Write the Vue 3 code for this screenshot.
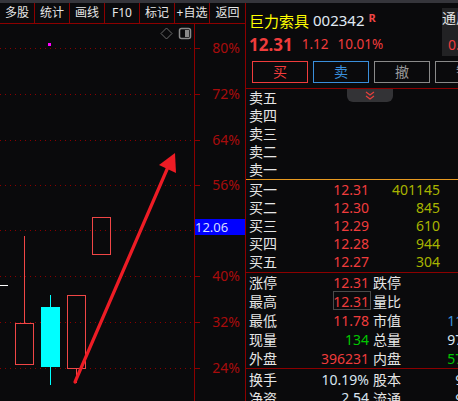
<template>
  <div class="page">
    <div class="top-strip"></div>
    <div class="main">
      <div class="left">
        <div class="toolbar">
          <div v-for="item in tools" :key="item" class="tool">{{ item }}</div>
        </div>
        <svg class="chart" viewBox="0 24 245 377" width="245" height="377">
          <g v-for="g in grid" :key="g.y">
            <line x1="0" :y1="g.y + 0.5" x2="194" :y2="g.y + 0.5" class="dots" />
            <line x1="194" :y1="g.y + 0.5" x2="200" :y2="g.y + 0.5" class="tick" />
            <text v-if="g.label" x="240" :y="g.y + 5" text-anchor="end" class="pct">{{ g.label }}</text>
          </g>
          <line x1="194.5" y1="24" x2="194.5" y2="401" class="tick" />

          <rect x="48" y="43" width="3" height="3" fill="#ff00ff" />
          <line x1="0" y1="285.5" x2="8" y2="285.5" stroke="#fff" />

          <line x1="24.5" y1="236" x2="24.5" y2="323" class="up" />
          <rect x="15.5" y="323.5" width="18" height="41" class="up" />
          <line x1="50.5" y1="295" x2="50.5" y2="385" stroke="#00ffff" />
          <rect x="41" y="307" width="19" height="60" fill="#00ffff" />
          <line x1="76.5" y1="368" x2="76.5" y2="383" class="up" />
          <rect x="67.5" y="295.5" width="18" height="73" class="up" />
          <rect x="92.5" y="217.5" width="18" height="37" class="up" />

          <line x1="75" y1="382" x2="168" y2="167" stroke="#ee1c25" stroke-width="3.2" stroke-linecap="round" />
          <polygon points="175,153 159,165 176,173" fill="#ee1c25" />

          <polygon points="166.5,28 172,33.5 166.5,39 161,33.5" fill="none" stroke="#6a6a6a" />
          <rect x="179.5" y="28.5" width="11" height="10" rx="2" fill="none" stroke="#8a8a8a" stroke-width="1.5" />
          <rect x="185" y="30" width="4" height="7" fill="#8a8a8a" />

          <rect x="195" y="219" width="50" height="16" fill="#0000ff" />
          <text x="195" y="232" class="cur">12.06</text>
        </svg>
      </div>

      <div class="panel">
        <div class="head">
          <div class="title">
            <span class="name">巨力索具</span>
            <span class="code">002342</span>
            <span class="rong">R</span>
          </div>
          <div class="quote">
            <span class="last">12.31</span>
            <span class="chg">1.12</span>
            <span class="chg">10.01%</span>
          </div>
          <div class="side-box">
            <span>通用</span>
            <span class="side-val">0.</span>
          </div>
        </div>

        <div class="actions">
          <div class="act buy">买</div>
          <div class="act sell">卖</div>
          <div class="act">撤</div>
          <div class="act">智</div>
        </div>

        <div class="book sells">
          <div class="collapse">
            <svg width="12" height="9" viewBox="0 0 12 9">
              <path d="M2 1l4 3 4-3M2 5l4 3 4-3" fill="none" stroke="#e8403c" stroke-width="1.2" />
            </svg>
          </div>
          <div v-for="s in sells" :key="s" class="row">{{ s }}</div>
        </div>

        <div class="book buys">
          <div v-for="b in buys" :key="b.label" class="row">
            <span>{{ b.label }}</span>
            <span class="price">{{ b.price }}</span>
            <span class="vol">{{ b.vol }}</span>
          </div>
        </div>

        <div class="stats">
          <div v-for="r in stats" :key="r.a" class="stat">
            <span class="lab">{{ r.a }}</span>
            <span class="val" :class="[r.cls, { boxed: r.boxed }]">{{ r.av }}</span>
            <span class="lab lab2">{{ r.b }}</span>
            <span class="val2" :class="r.cls2">{{ r.bv }}</span>
          </div>
        </div>

        <div class="stats lower">
          <div v-for="r in lower" :key="r.a" class="stat">
            <span class="lab">{{ r.a }}</span>
            <span class="val plain">{{ r.av }}</span>
            <span class="lab lab2">{{ r.b }}</span>
            <span class="val2 plain">{{ r.bv }}</span>
          </div>
        </div>
      </div>
    </div>
  </div>
</template>

<script setup>
const tools = ['多股', '统计', '画线', 'F10', '标记', '+自选', '返回']

const grid = [
  { y: 48, label: '80%' },
  { y: 94, label: '72%' },
  { y: 140, label: '64%' },
  { y: 185, label: '56%' },
  { y: 230, label: '' },
  { y: 276, label: '40%' },
  { y: 322, label: '32%' },
  { y: 368, label: '24%' },
]

const sells = ['卖五', '卖四', '卖三', '卖二', '卖一']

const buys = [
  { label: '买一', price: '12.31', vol: '401145' },
  { label: '买二', price: '12.30', vol: '845' },
  { label: '买三', price: '12.29', vol: '610' },
  { label: '买四', price: '12.28', vol: '944' },
  { label: '买五', price: '12.27', vol: '304' },
]

const stats = [
  { a: '涨停', av: '12.31', cls: 'red', b: '跌停', bv: '' },
  { a: '最高', av: '12.31', cls: 'red', boxed: true, b: '量比', bv: '' },
  { a: '最低', av: '11.78', cls: 'red', b: '市值', bv: '11.8亿', cls2: 'blue' },
  { a: '现量', av: '134', cls: 'green', b: '总量', bv: '97.1万', cls2: 'plain' },
  { a: '外盘', av: '396231', cls: 'red', b: '内盘', bv: '57.5万', cls2: 'green' },
]

const lower = [
  { a: '换手', av: '10.19%', b: '股本', bv: '9.6亿' },
  { a: '净资', av: '2.54', b: '流通', bv: '9.5亿' },
]
</script>

<style>
html,
body {
  margin: 0;
  background: #0a0a0c;
}
</style>

<style scoped>
.page {
  width: 458px;
  height: 401px;
  overflow: hidden;
  background: #0a0a0c;
  color: #e6e6e6;
  font-family: "Noto Sans", "Noto Sans CJK SC", sans-serif;
  font-size: 14px;
}

.top-strip {
  height: 3px;
  background: #35353b;
}

.main {
  display: flex;
  height: 398px;
}

.left {
  width: 245px;
  flex: none;
}

.toolbar {
  display: flex;
  height: 20px;
  border-bottom: 1px solid #8c0000;
}

.tool {
  width: 35px;
  flex: none;
  box-sizing: border-box;
  border-right: 1px solid #8c0000;
  text-align: center;
  font-size: 12px;
  line-height: 20px;
  white-space: nowrap;
}

.tool:last-child {
  border-right: none;
}

.chart {
  display: block;
}

.dots {
  stroke: #8c0000;
  stroke-dasharray: 1 4;
}

.tick {
  stroke: #8c0000;
}

.pct {
  fill: #a80c0c;
  font-size: 14px;
}

.up {
  fill: none;
  stroke: #f04646;
}

.cur {
  fill: #d4dcff;
  font-size: 13px;
}

.panel {
  flex: 1;
  min-width: 0;
  border-left: 1px solid #8c0000;
}

.head {
  position: relative;
  height: 56px;
  padding: 5px 0 0 3px;
  box-sizing: border-box;
}

.title {
  display: flex;
  align-items: center;
  height: 24px;
  font-size: 15px;
}

.name {
  color: #ffff00;
}

.code {
  margin-left: 4px;
  color: #e0eaf5;
  font-size: 15px;
}

.rong {
  margin: -6px 0 0 4px;
  color: #f04646;
  font-size: 11px;
  font-weight: 700;
}

.quote {
  display: flex;
  align-items: center;
  gap: 9px;
  height: 24px;
  color: #f03c3c;
}

.last {
  font-size: 17px;
  font-weight: 700;
}

.chg {
  font-size: 13.5px;
}

.side-box {
  position: absolute;
  left: 196px;
  top: 5px;
  width: 20px;
  height: 48px;
  display: flex;
  flex-direction: column;
  background: #222224;
  white-space: nowrap;
  line-height: 20px;
}

.side-val {
  margin: 7px 0 0 6px;
  color: #f03c3c;
}

.actions {
  display: flex;
  gap: 5px;
  height: 22px;
  padding: 2px 0 5px 6px;
}

.act {
  width: 56px;
  height: 22px;
  flex: none;
  box-sizing: border-box;
  border: 1px solid #8a8a8a;
  color: #9a9a9a;
  text-align: center;
  line-height: 20px;
}

.act.buy {
  border-color: #f03c3c;
  color: #f03c3c;
}

.act.sell {
  border-color: #3a8fdc;
  color: #3a8fdc;
}

.book {
  position: relative;
  padding-left: 3px;
}

.sells {
  border-top: 1px solid #8c0000;
  border-bottom: 1px solid #e89a20;
}

.collapse {
  position: absolute;
  left: 101px;
  top: 0;
  width: 46px;
  height: 13px;
  display: flex;
  align-items: center;
  justify-content: center;
  background: #333336;
  border-radius: 0 0 6px 6px;
}

.row {
  display: flex;
  height: 18px;
  line-height: 18px;
  white-space: nowrap;
}

.buys {
  padding-top: 1px;
  padding-bottom: 0.5px;
  border-bottom: 1px solid #8c0000;
}

.price {
  width: 92px;
  text-align: right;
  color: #f03c3c;
}

.vol {
  width: 71px;
  text-align: right;
  color: #a8b400;
}

.stats {
  padding-left: 3px;
  border-bottom: 1px solid #8c0000;
}

.stats.lower {
  border-bottom: none;
  padding-top: 1.5px;
}

.stat {
  display: flex;
  align-items: center;
  height: 19px;
  white-space: nowrap;
}

.lower .stat {
  height: 18.5px;
}

.lab {
  width: 28px;
  flex: none;
}

.val {
  width: 92px;
  flex: none;
  box-sizing: border-box;
  text-align: right;
}

.boxed {
  position: relative;
}

.boxed::after {
  content: "";
  position: absolute;
  right: -2px;
  top: -1px;
  width: 36px;
  height: 17px;
  border: 1px solid #4a4a4a;
}

.lab2 {
  margin-left: 4px;
}

.val2 {
  width: 88px;
  flex: none;
  text-align: right;
}

.red {
  color: #f03c3c;
}

.green {
  color: #00c800;
}

.blue {
  color: #3a8fdc;
}

.plain {
  color: #d8e4f0;
}
</style>
